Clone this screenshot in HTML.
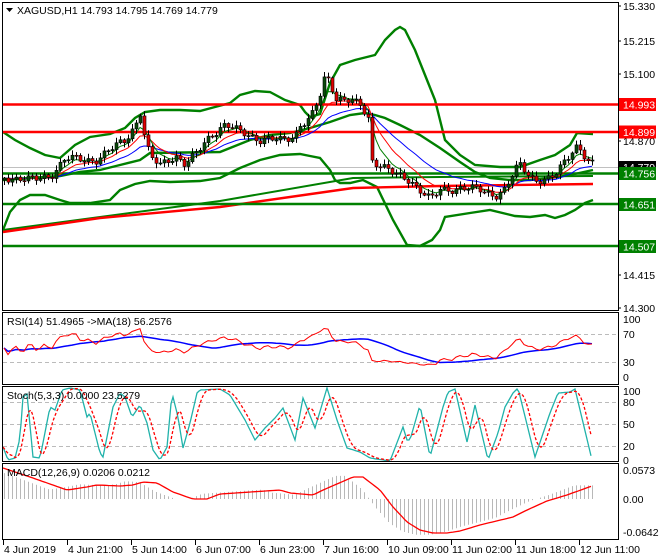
<!DOCTYPE html><html><head><meta charset="utf-8"><style>
body{margin:0;background:#fff;width:660px;height:560px;overflow:hidden;font-family:"Liberation Sans",sans-serif}
svg{display:block}
text{font-family:"Liberation Sans",sans-serif;font-size:10.5px}
</style></head><body>
<svg id="s" width="660" height="560" xmlns="http://www.w3.org/2000/svg">
<rect width="660" height="560" fill="#fff"/>
<g id="grid" stroke="#bbb" stroke-dasharray="4,3" stroke-width="1">
<line x1="3" x2="618" y1="334.5" y2="334.5"/><line x1="3" x2="618" y1="362.5" y2="362.5"/>
<line x1="3" x2="618" y1="402.5" y2="402.5"/><line x1="3" x2="618" y1="424.5" y2="424.5"/><line x1="3" x2="618" y1="446.5" y2="446.5"/>
</g>
<line x1="3" x2="618" y1="167.5" y2="167.5" stroke="#c0c0c0"/>
<g id="bb" fill="none" stroke="#008000" stroke-width="2.4">
<polyline points="3,132 15,140 30,148 45,155 60,158 75,145 90,137 110,134 125,128 135,118 145,112 160,110 180,110 200,111 215,107 230,103 240,95 255,91 270,92 285,100 300,105 305,112 310,117 320,114 330,83 340,65 355,60 375,55 385,40 395,30 400,27 405,30 415,50 425,75 435,100 440,120 445,140 460,155 475,165 500,167 520,167 540,160 555,155 570,145 577,133 593,134"/>
<polyline points="3,180 30,178 60,176 80,172 100,170 120,165 140,160 150,153 220,152 250,140 270,135 290,133 310,128 330,122 350,115 365,113 375,115 385,118 400,125 420,135 440,148 460,162 475,172 490,178 510,180 530,180 550,178 570,175 593,170"/>
<polyline points="3,230 10,212 20,200 30,195 45,195 60,200 70,203 90,203 110,200 120,190 135,184 150,181 170,182 200,181 220,178 240,168 260,160 280,155 300,154 310,156 320,158 330,170 335,180 340,183 350,183 363,180 377,187 393,220 407,245 420,246 432,240 440,230 445,217 470,213 490,210 515,216 530,217 545,215 555,218 565,215 575,210 585,203 593,200"/>
<polyline points="3,230 220,201 353,178 440,177 593,176" stroke-width="2"/>
</g>
<polyline points="3,232 100,218 220,207 353,188 440,186 593,184" fill="none" stroke="#f00" stroke-width="2.4"/>
<g stroke-width="2.4">
<line x1="3" x2="618" y1="104.5" y2="104.5" stroke="#f00"/>
<line x1="3" x2="618" y1="132" y2="132" stroke="#f00"/>
<line x1="3" x2="618" y1="173.5" y2="173.5" stroke="#008000"/>
<line x1="3" x2="618" y1="204" y2="204" stroke="#008000"/>
<line x1="3" x2="618" y1="246" y2="246" stroke="#008000"/>
</g>
<g id="dyn"></g>
<g fill="none" stroke="#000">
<rect x="2.5" y="2.5" width="616" height="308"/>
<rect x="2.5" y="312.5" width="616" height="72"/>
<rect x="2.5" y="386.5" width="616" height="75"/>
<rect x="2.5" y="463.5" width="616" height="76"/>
</g>
<polygon points="6,8 13,8 9.5,12" fill="#000"/>
<text x="17" y="14">XAGUSD,H1  14.793 14.795 14.769 14.779</text>
<text x="7" y="325">RSI(14) 51.4965  -&gt;MA(18) 56.2576</text>
<text x="7" y="399">Stoch(5,3,3) 0.0000 23.5279</text>
<text x="7" y="476">MACD(12,26,9) 0.0206 0.0212</text>
<g id="ax" fill="#000"></g>
<g fill="#fff">
<rect x="619" y="98" width="37" height="13" fill="#f00"/><text x="623" y="108.5">14.993</text>
<rect x="619" y="125.5" width="37" height="13" fill="#f00"/><text x="623" y="136">14.899</text>
<rect x="619" y="161" width="37" height="13" fill="#000"/><text x="623" y="171">14.779</text>
<rect x="619" y="167" width="37" height="13" fill="#008000"/><text x="623" y="177.5">14.756</text>
<rect x="619" y="198" width="37" height="13" fill="#008000"/><text x="623" y="208.5">14.651</text>
<rect x="619" y="240" width="37" height="13" fill="#008000"/><text x="623" y="250.5">14.507</text>
</g>
</svg>
<script>
var NS="http://www.w3.org/2000/svg",dyn=document.getElementById('dyn'),ax=document.getElementById('ax');
function el(t,a,p){var e=document.createElementNS(NS,t);for(var k in a)e.setAttribute(k,a[k]);(p||dyn).appendChild(e);return e;}
function txt(x,y,s,p){var e=el('text',{x:x,y:y},p);e.textContent=s;}
[[15.330,9],[15.215,44],[15.100,77],[14.870,144],[14.415,278],[14.300,311]].forEach(function(a){txt(623,a[1]+1,a[0].toFixed(3),ax);el('line',{x1:618,x2:621,y1:a[1]-3,y2:a[1]-3,stroke:'#000'},ax);});
[['100',319],['70',334],['30',362],['0',377],['100',391],['80',402],['50',424],['20',446],['0',460],['0.0573',470],['0.00',499],['-0.0642',532]].forEach(function(a){txt(623,a[1]+4,a[0],ax);});
var tl=[['4 Jun 2019',3],['4 Jun 21:00',67],['5 Jun 14:00',131],['6 Jun 07:00',195],['6 Jun 23:00',259],['7 Jun 16:00',323],['10 Jun 09:00',387],['11 Jun 02:00',451],['11 Jun 18:00',515],['12 Jun 11:00',579]];
tl.forEach(function(a){el('line',{x1:a[1]+.5,x2:a[1]+.5,y1:540,y2:545,stroke:'#000'},ax);txt(a[1]+1,553,a[0],ax);});
function mk(kp){return function(x){if(x<=kp[0][0])return kp[0][1];for(var i=0;i<kp.length-1;i++){if(x<=kp[i+1][0]){var t=(x-kp[i][0])/(kp[i+1][0]-kp[i][0]);return kp[i][1]+t*(kp[i+1][1]-kp[i][1]);}}return kp[kp.length-1][1];};}
var interp=mk([[5,178],[20,178],[35,180],[50,176],[65,158],[80,160],[95,160],[110,150],[125,140],[135,125],[140,112],[145,140],[150,158],[160,165],[175,155],[185,165],[195,155],[210,135],[225,125],[235,130],[245,133],[260,140],[280,140],[295,135],[300,125],[310,120],[320,95],[325,75],[330,80],[335,98],[345,100],[360,105],[368,118],[372,160],[380,165],[395,175],[410,180],[425,195],[430,200],[440,190],[460,188],[480,190],[495,195],[505,190],[515,170],[520,165],[535,180],[550,180],[555,175],[565,160],[575,145],[580,150],[585,158],[590,165]]);
var N=148,X=[],C=[],O=[],H=[],L=[];
for(var i=0;i<N;i++){var x=4+4*i;X.push(x);var c=interp(x)+3*Math.sin(i*1.7)+2*Math.sin(i*0.63);C.push(c);}
for(i=0;i<N;i++){O[i]=i?C[i-1]:C[0]+2;H[i]=Math.min(O[i],C[i])-1-Math.abs(4*Math.sin(i*2.3));L[i]=Math.max(O[i],C[i])+1+Math.abs(4*Math.cos(i*1.9));}
function P(y){return 15.330-(y-6)/292.2;}
var cp=C.map(P);
function ema(a,n){var k=2/(n+1),r=[a[0]];for(var i=1;i<a.length;i++)r.push(a[i]*k+r[i-1]*(1-k));return r;}
function pl(xs,ys,col,w,dash){el('polyline',{points:xs.map(function(x,i){return x+','+ys[i].toFixed(1)}).join(' '),fill:'none',stroke:col,'stroke-width':w||1,'stroke-dasharray':dash||'none'});}
pl(X,ema(C,21),'#00f',1);pl(X,ema(C,10),'#f00',1);pl(X,ema(C,5),'#008000',1);
for(i=0;i<N;i++){var x=X[i];el('line',{x1:x+.5,x2:x+.5,y1:H[i],y2:L[i],stroke:'#000'});var t=Math.min(O[i],C[i]),b=Math.max(O[i],C[i]);if(b-t<1)b=t+1;el('rect',{x:x-1,y:t,width:3,height:b-t,fill:C[i]<O[i]?'#0a4a0a':'#e00000',stroke:'#000','stroke-width':.6});}
// RSI
var g=[0],l=[0];for(i=1;i<N;i++){var d=cp[i]-cp[i-1];g.push(Math.max(d,0));l.push(Math.max(-d,0));}
var ag=0.002,al=0.002,rsi=[];for(i=0;i<N;i++){ag=(ag*13+g[i])/14;al=(al*13+l[i])/14;rsi.push(100-100/(1+ag/al));}
var rma=[];for(i=0;i<N;i++){var s=0,n=0;for(var j=Math.max(0,i-17);j<=i;j++){s+=rsi[j];n++;}rma.push(s/n);}
function ry(v){return 377-v*0.58;}
pl(X,rma.map(ry),'#00f',1.5);pl(X,rsi.map(ry),'#f00',1);
// Stoch (hand keypoints)
var sk=mk([[3,447],[8,460],[15,458],[20,438],[23,397],[27,394],[33,457],[40,458],[50,407],[55,410],[62,390],[70,388],[80,390],[87,417],[90,413],[100,453],[103,457],[113,407],[120,393],[125,397],[132,417],[140,405],[147,423],[153,450],[160,460],[167,447],[172,393],[178,417],[183,448],[190,423],[197,393],[200,390],[220,389],[230,395],[245,420],[255,440],[265,428],[275,418],[283,408],[295,440],[303,398],[315,428],[327,388],[337,420],[347,448],[360,452],[370,458],[390,461],[403,427],[407,440],[410,440],[420,405],[430,457],[443,407],[448,392],[455,389],[467,442],[475,405],[488,460],[498,433],[505,407],[513,393],[518,388],[535,457],[550,413],[558,393],[570,392],[575,389],[592,460]]);
var SX=[],KS=[],DS=[];for(x=3;x<=592;x+=2){SX.push(x);KS.push(sk(x));}
for(i=0;i<KS.length;i++){var s2=0,c2=0;for(j=Math.max(0,i-5);j<=i;j++){s2+=KS[j];c2++;}DS.push(s2/c2);}
pl(SX,KS,'#20b2aa',1.3);pl(SX,DS,'#f00',1.3,'3,2');
// MACD (hand keypoints)
var sg=mk([[3,468],[33,478],[67,490],[87,487],[97,485],[120,486],[133,485],[143,482],[157,483],[173,492],[193,499],[207,499],[220,494],[280,490],[290,493],[313,495],[323,490],[353,477],[363,477],[380,490],[393,507],[407,522],[420,530],[433,533],[447,533],[460,531],[480,525],[513,517],[527,510],[547,501],[567,495],[592,486]]);
for(i=0;i<N;i++){x=X[i];if(x>592)break;var v=499+(sg(x+18)-499)*1.05;if(Math.abs(v-499)<1)continue;el('line',{x1:x+.5,x2:x+.5,y1:499,y2:v,stroke:'#b8b8b8'});}
var MX=[],MY=[];for(x=3;x<=592;x+=3){MX.push(x);MY.push(sg(x));}
pl(MX,MY,'#f00',1.3);
</script>
</body></html>
